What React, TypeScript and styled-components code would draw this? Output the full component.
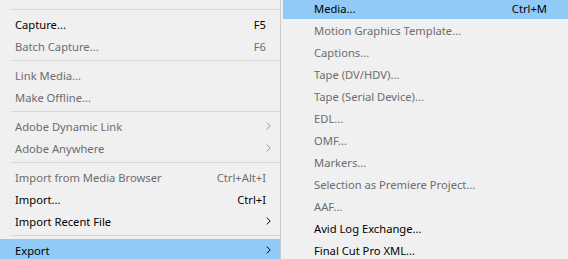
import React from 'react';
import styled, { createGlobalStyle } from 'styled-components';

type Item =
  | { kind: 'sep' }
  | {
      kind?: 'item';
      label: string;
      shortcut?: string;
      disabled?: boolean;
      submenu?: boolean;
      active?: boolean;
    };

const GlobalStyle = createGlobalStyle`
  html, body {
    margin: 0;
    padding: 0;
    background: #f0f0f0;
    overflow: hidden;
  }
  body {
    font-family: 'Noto Sans', 'Open Sans', sans-serif;
    font-size: 11.2px;
  }
`;

const Screen = styled.div`
  display: flex;
  width: 568px;
  height: 259px;
  overflow: hidden;
  background: #f0f0f0;
`;

const MainMenu = styled.div`
  width: 280px;
  flex: none;
  border-right: 1px solid #cccccc;
  padding-top: 6px;
  display: flex;
  flex-direction: column;
`;

const SubMenu = styled.div`
  flex: 1;
  margin-top: -3px;
  padding-left: 2px;
  display: flex;
  flex-direction: column;
`;

const Row = styled.div<{ $active?: boolean; $disabled?: boolean; $indent: number; $end: number }>`
  height: 22px;
  flex: none;
  display: flex;
  align-items: center;
  padding-left: ${(p) => p.$indent}px;
  padding-right: ${(p) => p.$end}px;
  background: ${(p) => (p.$active ? '#91c9f7' : 'transparent')};
  color: ${(p) => (p.$disabled ? '#6d6d6d' : '#000000')};
  white-space: nowrap;
`;

const Label = styled.span`
  flex: 1;
`;

const Shortcut = styled.span<{ $gap: number }>`
  margin-right: ${(p) => p.$gap}px;
`;

const Chevron = styled.svg`
  width: 5px;
  height: 8px;
  margin-right: 1px;
`;

const Separator = styled.div`
  height: 7px;
  flex: none;
  display: flex;
  align-items: center;
  padding-left: 11px;
  &::after {
    content: '';
    flex: 1;
    height: 1px;
    background: #d7d7d7;
  }
`;

const mainItems: Item[] = [
  { kind: 'sep' },
  { label: 'Capture...', shortcut: 'F5' },
  { label: 'Batch Capture...', shortcut: 'F6', disabled: true },
  { kind: 'sep' },
  { label: 'Link Media...', disabled: true },
  { label: 'Make Offline...', disabled: true },
  { kind: 'sep' },
  { label: 'Adobe Dynamic Link', disabled: true, submenu: true },
  { label: 'Adobe Anywhere', disabled: true, submenu: true },
  { kind: 'sep' },
  { label: 'Import from Media Browser', shortcut: 'Ctrl+Alt+I', disabled: true },
  { label: 'Import...', shortcut: 'Ctrl+I' },
  { label: 'Import Recent File', submenu: true },
  { kind: 'sep' },
  { label: 'Export', submenu: true, active: true },
];

const exportItems: Item[] = [
  { label: 'Media...', shortcut: 'Ctrl+M', active: true },
  { label: 'Motion Graphics Template...', disabled: true },
  { label: 'Captions...', disabled: true },
  { label: 'Tape (DV/HDV)...', disabled: true },
  { label: 'Tape (Serial Device)...', disabled: true },
  { label: 'EDL...', disabled: true },
  { label: 'OMF...', disabled: true },
  { label: 'Markers...', disabled: true },
  { label: 'Selection as Premiere Project...', disabled: true },
  { label: 'AAF...', disabled: true },
  { label: 'Avid Log Exchange...' },
  { label: 'Final Cut Pro XML...' },
];

const MenuList: React.FC<{ items: Item[]; indent: number; end: number }> = ({
  items,
  indent,
  end,
}) => (
  <>
    {items.map((item, i) => {
      if (item.kind === 'sep') return <Separator key={i} />;
      return (
        <Row
          key={i}
          $active={item.active}
          $disabled={item.disabled}
          $indent={indent}
          $end={end}
        >
          <Label>{item.label}</Label>
          {item.shortcut && <Shortcut $gap={6}>{item.shortcut}</Shortcut>}
          {item.submenu && (
            <Chevron viewBox='0 0 5 8'>
              <path
                d='M0.8 0.6 L4.2 4 L0.8 7.4'
                fill='none'
                stroke={item.disabled ? '#9a9a9a' : '#000'}
                strokeWidth='1'
              />
            </Chevron>
          )}
        </Row>
      );
    })}
  </>
);

const App: React.FC = () => (
  <>
    <GlobalStyle />
    <Screen>
      <MainMenu>
        <MenuList items={mainItems} indent={15} end={8} />
      </MainMenu>
      <SubMenu>
        <MenuList items={exportItems} indent={31} end={15} />
      </SubMenu>
    </Screen>
  </>
);

export default App;
